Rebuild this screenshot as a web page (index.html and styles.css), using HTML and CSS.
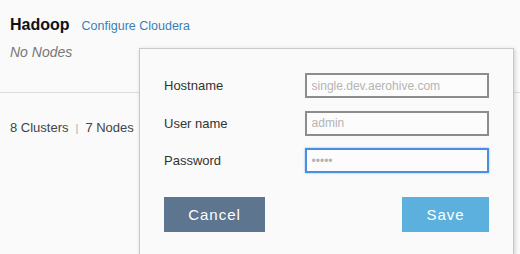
FILE: index.html
```html
<!DOCTYPE html>
<html lang="en">
<head>
    <meta charset="UTF-8">
    <title>Hadoop</title>
    <link rel="stylesheet" href="styles.css">
</head>
<body>
    <div class="cluster-head">
        <div class="title-row">
            <h2>Hadoop</h2>
            <a href="#" class="config-link">Configure Cloudera</a>
        </div>
        <p class="empty">No Nodes</p>
    </div>
    <div class="summary">
        <span>8 Clusters</span>
        <span class="sep">|</span>
        <span>7 Nodes</span>
    </div>

    <div class="modal">
        <form class="cfg-form">
            <div class="form-row">
                <label for="host">Hostname</label>
                <input type="text" id="host" value="single.dev.aerohive.com">
            </div>
            <div class="form-row">
                <label for="user">User name</label>
                <input type="text" id="user" value="admin">
            </div>
            <div class="form-row">
                <label for="pass">Password</label>
                <input type="password" id="pass" class="focused" value="admin">
            </div>
            <div class="actions">
                <button type="button" class="btn btn-cancel">Cancel</button>
                <button type="submit" class="btn btn-save">Save</button>
            </div>
        </form>
    </div>
</body>
</html>
```

FILE: styles.css
```css
* {
    margin: 0;
    padding: 0;
    box-sizing: border-box;
    font-family: 'Liberation Sans', Arial, sans-serif;
}

body {
    background: #fafafa;
    width: 520px;
    height: 254px;
    overflow: hidden;
    position: relative;
}

.cluster-head {
    padding: 15px 10px 0;
    height: 93px;
    border-bottom: 1px solid #dcdcdc;
}

.title-row {
    display: flex;
    align-items: baseline;
    gap: 12px;
}

.title-row h2 {
    font-size: 16px;
    font-weight: 700;
    color: #111;
    line-height: 20px;
}

.config-link {
    font-size: 12.5px;
    color: #3b7fb8;
    text-decoration: none;
}

.empty {
    margin-top: 9px;
    font-size: 14px;
    font-style: italic;
    color: #777;
}

.summary {
    padding: 27px 10px 0;
    font-size: 13px;
    color: #444;
    display: flex;
    gap: 7px;
}

.summary .sep {
    color: #aaa;
    font-size: 11px;
    line-height: 16px;
}

.modal {
    position: absolute;
    left: 139px;
    top: 48px;
    width: 375px;
    height: 207px;
    background: #fafafa;
    border: 1px solid #c9c9c9;
    border-bottom: none;
    box-shadow: 1px 1px 4px rgba(0, 0, 0, 0.18);
    padding: 24px 24px 0;
}

.form-row {
    display: flex;
    align-items: center;
    height: 25px;
    margin-bottom: 12.5px;
}

.form-row label {
    width: 141px;
    font-size: 13px;
    color: #333;
}

.form-row input {
    width: 185px;
    height: 25px;
    border: 2px solid #8c8c8c;
    background: #fcfcfc;
    padding: 0 5px;
    font-size: 12px;
    color: #b4b4b4;
    outline: none;
}

.form-row input.focused {
    border-color: #4a8ee0;
    box-shadow: 0 0 2px #8ab8f0;
}

.actions {
    display: flex;
    justify-content: space-between;
    margin-top: 24px;
}

.btn {
    height: 35px;
    border: none;
    font-size: 15px;
    letter-spacing: 1px;
    color: #fff;
    cursor: pointer;
}

.btn-cancel {
    width: 101px;
    background: #5e7590;
}

.btn-save {
    width: 87px;
    background: #5cb0dd;
}
```
